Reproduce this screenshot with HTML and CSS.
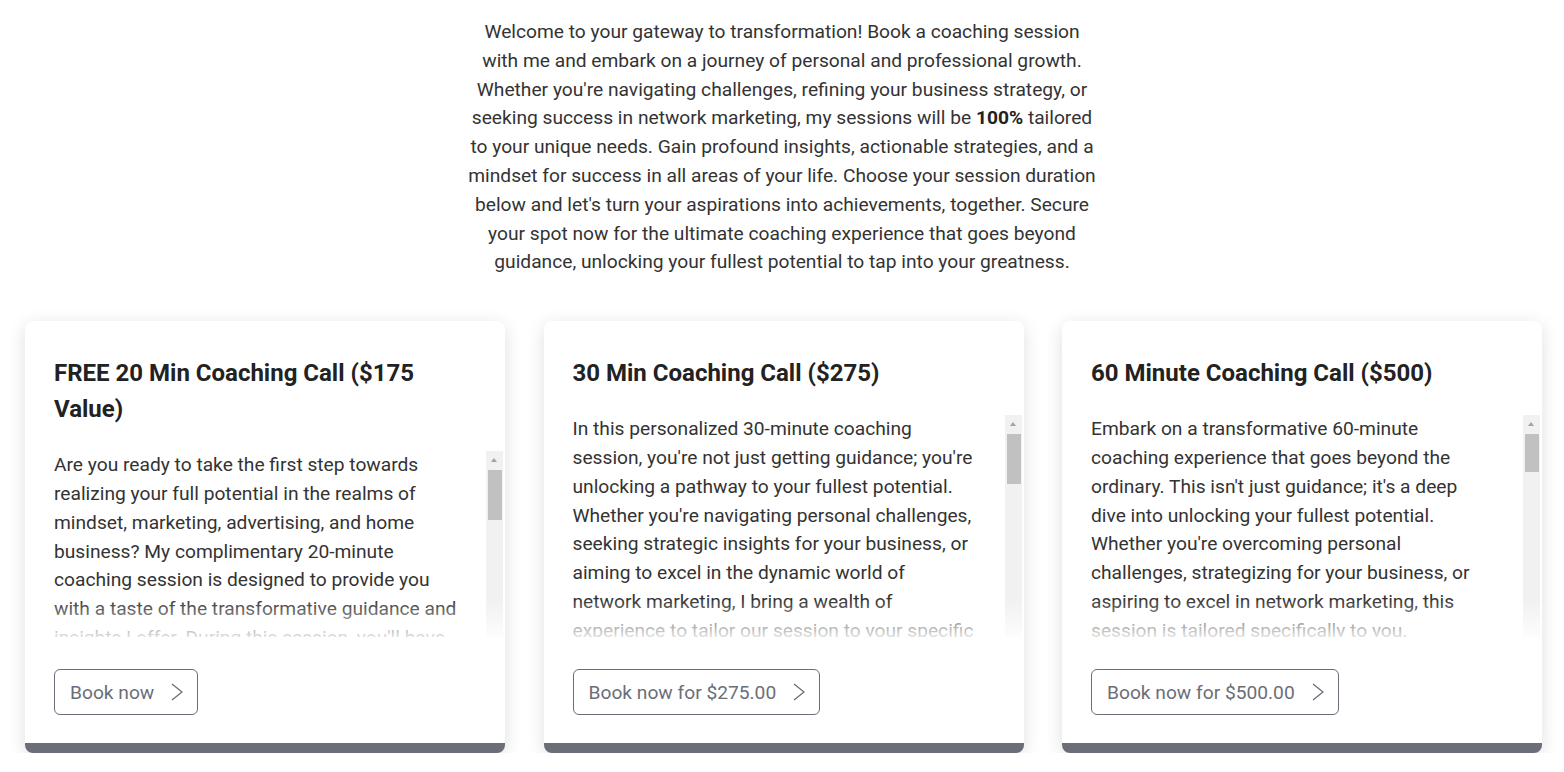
FILE: index.html
```html
<!DOCTYPE html>
<html lang="en">
<head>
    <meta charset="UTF-8">
    <title>Coaching Sessions</title>
    <meta name="viewport" content="width=device-width, initial-scale=1">
    <link rel="stylesheet" href="styles.css">
</head>
<body>
<main>
    <!-- Intro -->
    <p class="intro">Welcome to your gateway to transformation! Book a coaching session with me and embark on a journey of personal and professional growth. Whether you're navigating challenges, refining your business strategy, or seeking success in network marketing, my sessions will be <strong>100%</strong> tailored to your unique needs. Gain profound insights, actionable strategies, and a mindset for success in all areas of your life. Choose your session duration below and let's turn your aspirations into achievements, together. Secure your spot now for the ultimate coaching experience that goes beyond guidance, unlocking your fullest potential to tap into your greatness.</p>

    <!-- Session cards -->
    <div class="plans">
        <div class="plan">
            <h2>FREE 20 Min Coaching Call ($175 Value)</h2>
            <div class="desc-wrap">
                <div class="desc">
                    <p>Are you ready to take the first step towards realizing your full potential in the realms of mindset, marketing, advertising, and home business? My complimentary 20-minute coaching session is designed to provide you with a taste of the transformative guidance and insights I offer. During this session, you'll have the opportunity to share your goals, challenges, and aspirations, and together we'll uncover the key areas where you can make the biggest impact.</p>
                </div>
                <div class="scrollbar">
                    <div class="arrow"></div>
                    <div class="thumb" style="height:50px"></div>
                </div>
                <div class="fade"></div>
            </div>
            <a href="#" class="book"><span>Book now</span><svg width="12" height="18" viewBox="0 0 12 18"><polyline points="1,1 11,9 1,17" fill="none" stroke="#6b6e78" stroke-width="1.3"/></svg></a>
        </div>

        <div class="plan">
            <h2>30 Min Coaching Call ($275)</h2>
            <div class="desc-wrap">
                <div class="desc">
                    <p>In this personalized 30-minute coaching session, you're not just getting guidance; you're unlocking a pathway to your fullest potential. Whether you're navigating personal challenges, seeking strategic insights for your business, or aiming to excel in the dynamic world of network marketing, I bring a wealth of experience to tailor our session to your specific needs.</p>
                </div>
                <div class="scrollbar">
                    <div class="arrow"></div>
                    <div class="thumb" style="height:50px"></div>
                </div>
                <div class="fade"></div>
            </div>
            <a href="#" class="book"><span>Book now for $275.00</span><svg width="12" height="18" viewBox="0 0 12 18"><polyline points="1,1 11,9 1,17" fill="none" stroke="#6b6e78" stroke-width="1.3"/></svg></a>
        </div>

        <div class="plan">
            <h2>60 Minute Coaching Call ($500)</h2>
            <div class="desc-wrap">
                <div class="desc">
                    <p>Embark on a transformative 60-minute coaching experience that goes beyond the ordinary. This isn't just guidance; it's a deep dive into unlocking your fullest potential. Whether you're overcoming personal challenges, strategizing for your business, or aspiring to excel in network marketing, this session is tailored specifically to you.</p>
                    <p>With a full hour together, we have the time to explore every layer of what's holding you back and what will propel you forward.</p>
                </div>
                <div class="scrollbar">
                    <div class="arrow"></div>
                    <div class="thumb" style="height:38px"></div>
                </div>
                <div class="fade"></div>
            </div>
            <a href="#" class="book"><span>Book now for $500.00</span><svg width="12" height="18" viewBox="0 0 12 18"><polyline points="1,1 11,9 1,17" fill="none" stroke="#6b6e78" stroke-width="1.3"/></svg></a>
        </div>
    </div>
</main>
</body>
</html>
```

FILE: styles.css
```css
body { font-family: Roboto, "Liberation Sans", Arial, sans-serif; margin: 0; padding: 0; background: #fff; color: #333;}
main { padding: 18px 0 0;}
.intro { width: 634px; margin: 0 auto 44px; text-align: center; font-size: 19.2px; line-height: 28.8px; color: #333;}
.intro strong { color: #222;}

.plans { display: grid; grid-template-columns: repeat(3, 480px); column-gap: 38.5px; padding-left: 25px;}
.plan {
    display: flex;
    flex-direction: column;
    box-sizing: border-box;
    height: 432px;
    padding: 34px 0 28px 29px;
    background: #fff;
    border-radius: 8px;
    border-bottom: 10px solid #6b6e78;
    box-shadow: 0 4px 18px rgba(0,0,0,0.13);
}
.plan h2 { margin: 0 29px 24px 0; font-size: 24px; line-height: 36px; font-weight: 700; color: #222;}

.desc-wrap { position: relative; display: flex; flex: 1 1 0; min-height: 0; margin-right: 2px; margin-bottom: 32px;}
.desc { flex: 1; overflow: hidden; padding-right: 27px; font-size: 19.2px; line-height: 28.8px; color: #333;}
.desc p { margin: 0 0 18px;}

/* fake classic scrollbar (real ones are hidden in headless) */
.scrollbar { flex: none; width: 17px; background: #f1f1f1;}
.scrollbar .arrow { height: 19px; position: relative;}
.scrollbar .arrow::after {
    content: "";
    position: absolute;
    left: 5px;
    top: 7px;
    border-left: 3.5px solid transparent;
    border-right: 3.5px solid transparent;
    border-bottom: 4px solid #a3a3a3;
}
.scrollbar .thumb { margin: 0 1px 0 2px; background: #c1c1c1;}

.fade {
    position: absolute;
    left: 0;
    right: 0;
    bottom: 0;
    height: 38px;
    background: linear-gradient(to bottom, rgba(255,255,255,0), rgba(255,255,255,0.85));
    pointer-events: none;
}

.book {
    align-self: flex-start;
    display: inline-flex;
    align-items: center;
    gap: 17px;
    height: 46px;
    box-sizing: border-box;
    padding: 0 14px 0 15px;
    border: 1px solid #6b6e78;
    border-radius: 6px;
    font-size: 19.2px;
    color: #6b6e78;
    text-decoration: none;
}
.book svg { display: block;}
```
